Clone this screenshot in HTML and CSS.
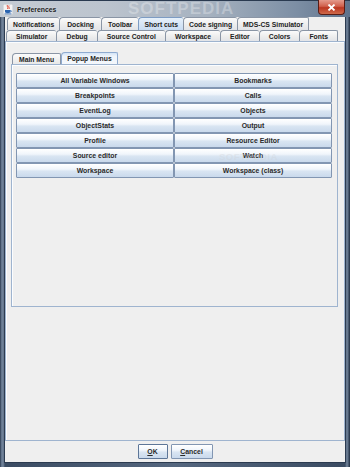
FILE: index.html
```html
<!DOCTYPE html>
<html>
<head>
<meta charset="utf-8">
<link rel="stylesheet" href="styles.css">
</head>
<body>
<div class="window">
  <div class="titlebar">
    <svg class="app-icon" width="10" height="11" viewBox="0 0 10 11">
      <rect x="0" y="0" width="10" height="11" fill="#f4f4f4" stroke="#9aa4b0" stroke-width="0.6"/>
      <path d="M4.5 1 C3 2.5 6 3 4.5 5 M6 1.5 C5 3 7 3.5 6 5" stroke="#e0402a" stroke-width="0.9" fill="none"/>
      <path d="M2 6 H7.5 V8 C7.5 9.5 2 9.5 2 8 Z" fill="#2a64b0"/>
      <path d="M7.5 6.5 C9 6.5 9 8 7.3 8" stroke="#2a64b0" stroke-width="0.7" fill="none"/>
      <rect x="1.5" y="9.5" width="7" height="0.8" fill="#2a64b0"/>
    </svg>
    <span class="title">Preferences</span>
    <span class="tb-watermark">SOFTPEDIA</span>
    <div class="close"><svg width="9" height="7" viewBox="0 0 9 7"><path d="M1.5 0.5 L7.5 6.5 M7.5 0.5 L1.5 6.5" stroke="#fff" stroke-width="1.8"/></svg></div>
  </div>
  <div class="client">
    <div class="tab-row row1">
      <div class="tab">Notifications</div>
      <div class="tab">Docking</div>
      <div class="tab">Toolbar</div>
      <div class="tab sel">Short cuts</div>
      <div class="tab">Code signing</div>
      <div class="tab">MDS-CS Simulator</div>
    </div>
    <div class="tab-row row2">
      <div class="tab">Simulator</div>
      <div class="tab">Debug</div>
      <div class="tab">Source Control</div>
      <div class="tab">Workspace</div>
      <div class="tab">Editor</div>
      <div class="tab">Colors</div>
      <div class="tab">Fonts</div>
    </div>
    <div class="outer-panel">
      <div class="inner-tabs">
        <div class="itab">Main Menu</div>
        <div class="itab sel">Popup Menus</div>
      </div>
      <div class="inner-panel">
        <div class="grid">
          <div class="btn">All Variable Windows</div>
          <div class="btn">Bookmarks</div>
          <div class="btn">Breakpoints</div>
          <div class="btn">Calls</div>
          <div class="btn">EventLog</div>
          <div class="btn">Objects</div>
          <div class="btn">ObjectStats</div>
          <div class="btn">Output</div>
          <div class="btn">Profile</div>
          <div class="btn">Resource Editor</div>
          <div class="btn">Source editor</div>
          <div class="btn">Watch</div>
          <div class="btn">Workspace</div>
          <div class="btn">Workspace (class)</div>
        </div>
        <span class="watermark">SOFTPEDIA</span>
      </div>
    </div>
    <div class="footer">
      <div class="btn dlg default"><u>O</u>K</div>
      <div class="btn dlg cancel"><u>C</u>ancel</div>
    </div>
  </div>
</div>
</body>
</html>
```

FILE: styles.css
```css
* { box-sizing: border-box; }
body {
  margin: 0;
  width: 350px;
  height: 467px;
  overflow: hidden;
  font-family: "Liberation Sans", Arial, sans-serif;
  background: #3d4f66;
}
.window {
  width: 350px;
  height: 467px;
  display: flex;
  flex-direction: column;
  background: linear-gradient(to right, #1e2c40 0, #5d6f87 1px, #75879e 3px, #3a4b62 5px, #55677f 50%, #3a4b62 calc(100% - 5px), #75879e calc(100% - 3px), #1e2c40 100%);
}
.titlebar {
  position: relative;
  height: 17px;
  flex: none;
  display: flex;
  align-items: center;
  background: linear-gradient(to right, #c4cbd3 0%, #bcc4ce 30%, #a5b1bf 60%, #7c8ea4 85%, #5f728b 100%);
  border-top: 1px solid #2a3a50;
}
.app-icon { margin-left: 3px; flex: none; }
.title {
  margin-left: 4px;
  font-size: 6.9px;
  color: #1a1a1a;
  font-weight: bold;
  text-shadow: 0 0 2px #e8ecf0;
}
.tb-watermark {
  position: absolute;
  left: 128px;
  top: -2px;
  font-size: 17px;
  font-weight: bold;
  letter-spacing: 1px;
  color: rgba(255,255,255,0.28);
}
.close {
  position: absolute;
  right: 5px;
  top: -1px;
  width: 27px;
  height: 15px;
  border: 1px solid #5a1c14;
  border-top: none;
  border-radius: 0 0 4px 4px;
  background: linear-gradient(#e49a8c, #d0604c 45%, #bb3621 55%, #cf6a4a);
  display: flex;
  align-items: center;
  justify-content: center;
}
.client {
  flex: 1;
  margin: 0 5px 5px 5px;
  background: #efefef;
  display: flex;
  flex-direction: column;
  box-shadow: 0 0 0 1px #2c3b50;
}
.tab-row {
  display: flex;
  flex: none;
}
.row1 { height: 13px; padding-left: 2px; }
.row2 { height: 11px; padding-left: 1px; padding-right: 7px; }
.tab {
  font-size: 6.8px;
  font-weight: bold;
  color: #222;
  padding: 0 5px;
  display: flex;
  align-items: center;
  justify-content: center;
  white-space: nowrap;
  background: linear-gradient(#fbfbfb, #ececec 60%, #e2e4e8);
  border: 1px solid #8a95a5;
  border-bottom: none;
  border-right: none;
  border-radius: 4px 2px 0 0;
}
.tab:last-child { border-right: 1px solid #8a95a5; }
.row1 .tab:nth-child(2) { padding: 0 7px; }
.row1 .tab:nth-child(3) { padding: 0 6px; }
.tab.sel {
  background: linear-gradient(#e6f0fa, #c9dcf2);
  border-color: #7d9cc4;
}
.row2 .tab { flex: 1 1 auto; padding: 0 3px; }
.outer-panel {
  height: 400px;
  flex: none;
  border: 1px solid #9fb4cf;
  box-shadow: inset 1px 1px 0 #fbfdff;
  padding: 10px 6px 0 5px;
  display: flex;
  flex-direction: column;
}
.inner-tabs {
  display: flex;
  height: 12px;
  padding-left: 1px;
  align-items: flex-end;
}
.itab {
  font-size: 6.8px;
  font-weight: bold;
  color: #222;
  height: 11px;
  padding: 0 6px;
  display: flex;
  align-items: center;
  background: linear-gradient(#fbfbfb, #e8e8e8);
  border: 1px solid #8a95a5;
  border-bottom: none;
  border-radius: 4px 2px 0 0;
}
.itab + .itab { border-left: none; }
.itab.sel {
  height: 12px;
  padding: 0 5px;
  background: linear-gradient(#d4e4f6, #eef4fb 30%, #f4f7fb);
  border-color: #8eaad0;
  border-left: 1px solid #8eaad0;
}
.inner-panel {
  position: relative;
  height: 243px;
  border: 1px solid #9fb4cf;
  box-shadow: inset 1px 1px 0 #fbfdff;
  padding: 8px 0 0 4px;
}
.grid {
  display: grid;
  grid-template-columns: 158px 158px;
  grid-auto-rows: 15px;
}
.btn {
  font-size: 6.9px;
  font-weight: bold;
  color: #2a2a2a;
  display: flex;
  align-items: center;
  justify-content: center;
  border: 1px solid #8296b2;
  border-radius: 1px;
  background: linear-gradient(#ffffff, #f0f5fb 40%, #d9e5f2 55%, #c9d9ec);
  box-shadow: inset 0 1px 0 #ffffff;
  white-space: nowrap;
}
.watermark {
  position: absolute;
  left: 207px;
  top: 86px;
  font-size: 9.5px;
  font-weight: bold;
  letter-spacing: 0.5px;
  color: rgba(205, 210, 216, 0.35);
  pointer-events: none;
}
.footer {
  flex: 1;
  display: flex;
  justify-content: center;
  align-items: flex-start;
  padding-top: 3px;
  gap: 3px;
}
.btn.dlg { height: 15px; }
.btn.default { width: 30px; border-color: #5d7698; }
.btn.cancel { width: 42px; }
.btn u { text-decoration-thickness: 1px; text-underline-offset: 1px; }
```
